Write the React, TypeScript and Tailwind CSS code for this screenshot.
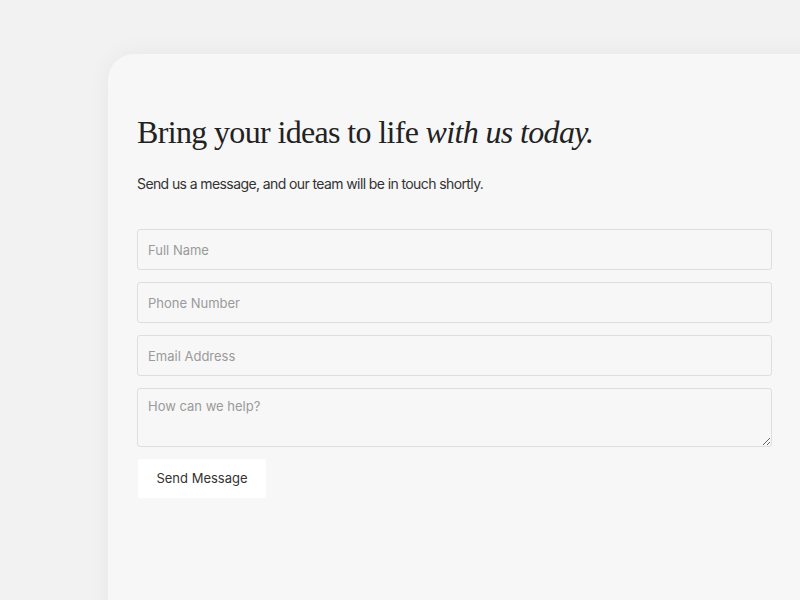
import { useState } from 'react'

const fieldClass =
  'w-full h-[41px] px-[10px] rounded-[3px] border border-[#dedede] bg-[#f7f7f7] text-[13px] text-[#333] placeholder:text-[#9a9a9a] outline-none'

export default function App() {
  const [form, setForm] = useState({ name: '', phone: '', email: '', message: '' })

  return (
    <div className="h-[600px] w-[800px] overflow-hidden bg-[#f2f2f2] pl-[108px] pt-[54px]" style={{ fontFamily: 'Inter, "Noto Sans", sans-serif' }}>
      <div className="min-h-[620px] w-[740px] rounded-tl-[26px] bg-[#f7f7f7] pl-[29px] pt-[58px] shadow-[0_0_24px_rgba(0,0,0,0.05)]">
        <h1 className="text-[32px] leading-[40px] tracking-[-0.65px] text-[#222]" style={{ fontFamily: '"Liberation Serif", "DejaVu Serif", serif' }}>
          Bring your ideas to life <em>with us today.</em>
        </h1>
        <p className="mt-[22px] text-[14px] leading-[20px] tracking-[-0.6px] text-[#333]">
          Send us a message, and our team will be in touch shortly.
        </p>

        <div className="mt-[35px] flex w-[635px] flex-col gap-[12px]">
          <input type="text" placeholder="Full Name" value={form.name}
            onChange={(e) => setForm({ ...form, name: e.target.value })} className={fieldClass} />
          <input type="tel" placeholder="Phone Number" value={form.phone}
            onChange={(e) => setForm({ ...form, phone: e.target.value })} className={fieldClass} />
          <input type="email" placeholder="Email Address" value={form.email}
            onChange={(e) => setForm({ ...form, email: e.target.value })} className={fieldClass} />
          <textarea placeholder="How can we help?" value={form.message}
            onChange={(e) => setForm({ ...form, message: e.target.value })}
            className="block h-[59px] w-full rounded-[3px] border border-[#dedede] bg-[#f7f7f7] px-[10px] py-[8px] text-[13px] text-[#333] placeholder:text-[#9a9a9a] outline-none" />
          <div>
            <button className="ml-px h-[39px] w-[128px] rounded-[2px] bg-white text-[13px] text-[#333]">
              Send Message
            </button>
          </div>
        </div>
      </div>
    </div>
  )
}
